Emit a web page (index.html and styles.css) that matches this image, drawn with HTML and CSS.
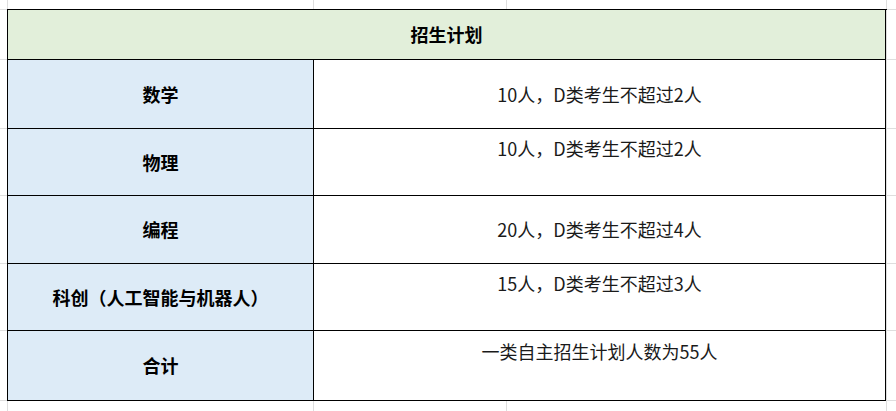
FILE: index.html
```html
<!DOCTYPE html>
<html lang="zh-CN">
<head>
<meta charset="utf-8">
<title>招生计划</title>
<link rel="stylesheet" href="styles.css">
</head>
<body>
<div class="sheet">
  <div class="head">招生计划</div>

  <div class="label">数学</div>
  <div class="value">10人，D类考生不超过2人</div>

  <div class="label">物理</div>
  <div class="value upper">10人，D类考生不超过2人</div>

  <div class="label">编程</div>
  <div class="value">20人，D类考生不超过4人</div>

  <div class="label">科创（人工智能与机器人）</div>
  <div class="value upper">15人，D类考生不超过3人</div>

  <div class="label">合计</div>
  <div class="value upper">一类自主招生计划人数为55人</div>
</div>
</body>
</html>
```

FILE: styles.css
```css
html, body {
  margin: 0;
  padding: 0;
}

body {
  width: 896px;
  height: 411px;
  overflow: hidden;
  font-family: "Noto Sans CJK SC", "Microsoft YaHei", "Noto Sans", sans-serif;
  background-color: #ffffff;
  background-image:
    linear-gradient(#dedede, #dedede),
    linear-gradient(#dedede, #dedede),
    linear-gradient(#dedede, #dedede),
    linear-gradient(#dedede, #dedede),
    linear-gradient(#dedede, #dedede),
    linear-gradient(#dedede, #dedede),
    linear-gradient(#dedede, #dedede),
    linear-gradient(#dedede, #dedede),
    linear-gradient(#dedede, #dedede),
    linear-gradient(#dedede, #dedede),
    linear-gradient(#dedede, #dedede);
  background-repeat: no-repeat;
  background-size:
    1px 100%, 1px 100%, 1px 100%, 1px 100%,
    100% 1px, 100% 1px, 100% 1px, 100% 1px, 100% 1px, 100% 1px, 100% 1px;
  background-position:
    7px 0, 313px 0, 506px 0, 886px 0,
    0 9px, 0 59px, 0 128px, 0 195px, 0 263px, 0 330px, 0 400px;
  padding-top: 9px;
  padding-left: 7px;
  box-sizing: border-box;
}

.sheet {
  display: grid;
  grid-template-columns: 306px 572px;
  grid-template-rows: 50px 69px 67px 68px 67px 70px;
  width: 879px;
  border-top: 1px solid #000;
  border-left: 1px solid #000;
  box-sizing: content-box;
}

.sheet > div {
  box-sizing: border-box;
  border-right: 1px solid #000;
  border-bottom: 1px solid #000;
  display: flex;
  align-items: center;
  justify-content: center;
  font-size: 18px;
  line-height: 26px;
}

.head {
  grid-column: 1 / 3;
  background: #e2efda;
  font-weight: 700;
  color: #000;
  padding-bottom: 1px;
}

.label {
  background: #ddebf7;
  font-weight: 700;
  color: #000;
  font-size: 17.5px;
  padding-bottom: 1px;
}

.value {
  background: #ffffff;
  color: #1a1a1a;
  font-weight: 400;
  padding-bottom: 1px;
}

.value.upper {
  padding-bottom: 29px;
}
```
